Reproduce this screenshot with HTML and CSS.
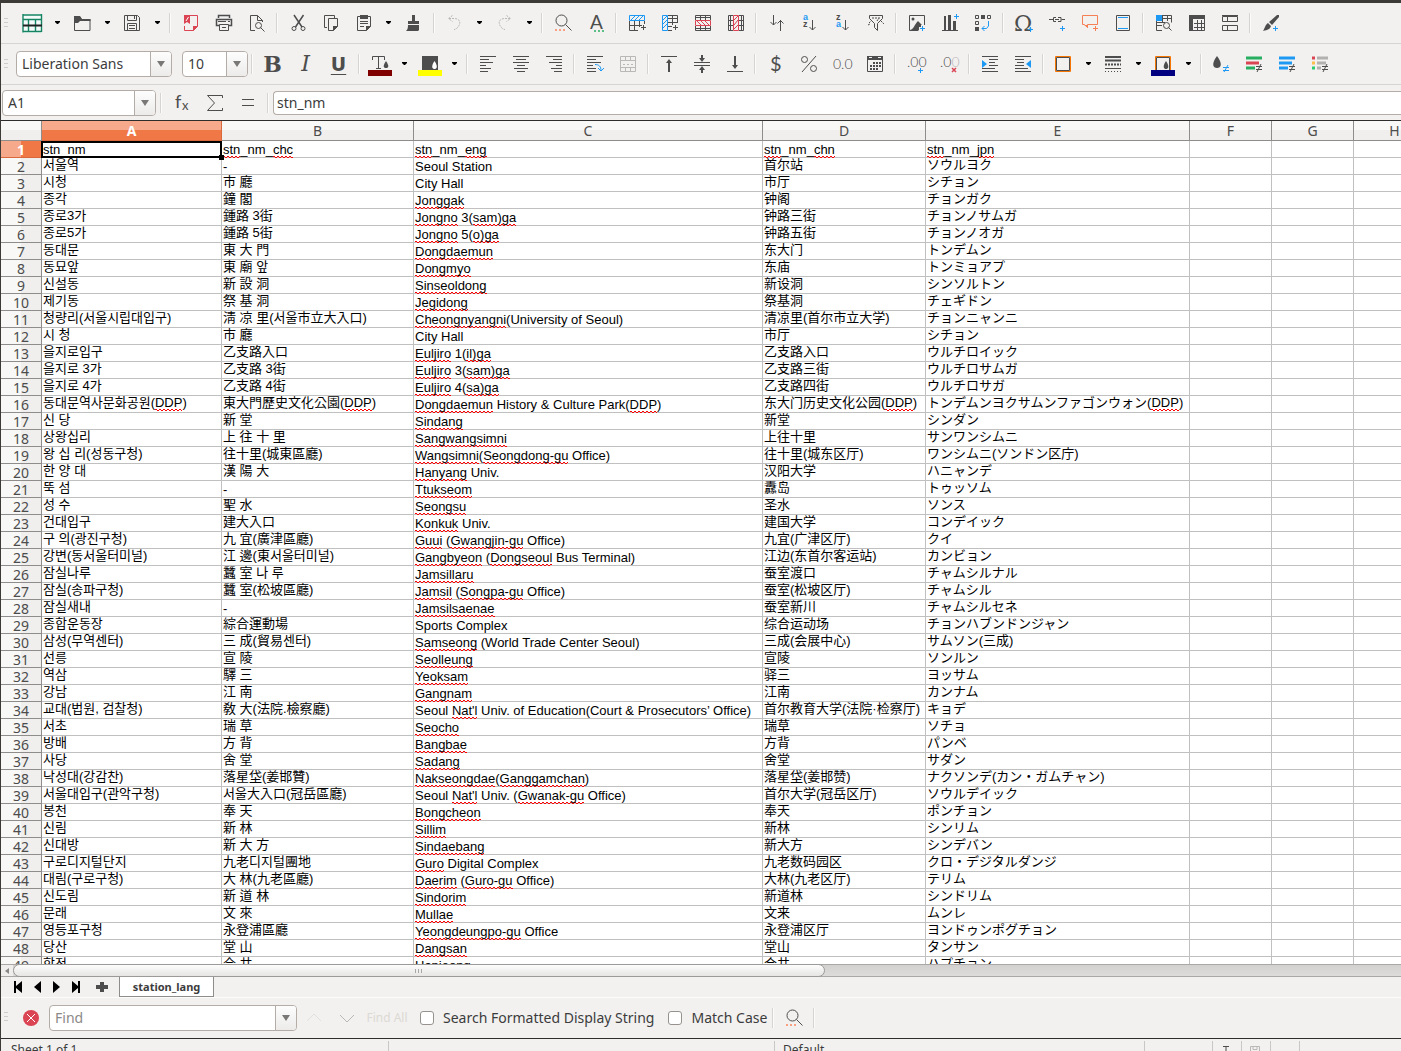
FILE: index.html
```html
<!DOCTYPE html>
<html lang="en">
<head>
<meta charset="utf-8">
<title>station_lang</title>
<link rel="stylesheet" href="styles.css">
</head>
<body>
<div class="app">
<div class="titlebar"></div>

<div class="toolbar" role="toolbar" aria-label="Standard">
<i class="grip"></i>
<button class="tool" aria-label="New"><svg viewBox="0 0 21 20"><path d="M1 1h19v19H1z" fill="#f4fbf8"/><path d="M.5 2h19M1 1v18.500M.5 6.500h19M.5 18.500h19M19.500 1v18M6.500 6.500v12M13.500 6.500v12" stroke="#168463" stroke-width="1.400"/><path d="M1 12.500h19" stroke="#222" stroke-width="2"/></svg></button>
<button class="drop" aria-label="New options"><svg viewBox="0 0 17 20"><path d="M6 8h5v1l-2 2h-1l-2-2z"/></svg></button>
<button class="tool" aria-label="Open"><svg viewBox="0 0 21 20"><path d="M2.500 17.500v-14h5l2 3h8.500v11z" class="k"/><path d="M2 3h6l2 3h8.500v2H8l-2 2H2z" class="f"/></svg></button>
<button class="drop" aria-label="Open options"><svg viewBox="0 0 17 20"><path d="M6 8h5v1l-2 2h-1l-2-2z"/></svg></button>
<button class="tool" aria-label="Save"><svg viewBox="0 0 21 20"><path d="M2.500 2.500h13l2 2v13h-15zM5.500 2.500v5h9v-5M5.500 17.500v-7h9v7M12.500 3v3M7 12.500h6M7 15.500h6" class="k"/></svg></button>
<button class="drop" aria-label="Save options"><svg viewBox="0 0 17 20"><path d="M6 8h5v1l-2 2h-1l-2-2z"/></svg></button>
<i class="sep"></i>
<button class="tool" aria-label="Export as PDF"><svg viewBox="0 0 21 20"><path d="M10 2.500h7.500v11l-4 4h-9V13" class="r"/><path d="M4 2h6v9l-3-2-3 2zM13 18v-5h5z" fill="#da4453"/><path d="M6 8l2.500-4" stroke="#fff"/></svg></button>
<button class="tool" aria-label="Print"><svg viewBox="0 0 21 20"><path d="M5.500 5V2.500h11V5M3.500 6.500h15v6h-15z" class="k" stroke-width="1.500"/><path d="M5 8.500h8M15 8.500h2" class="k"/><path d="M6.500 11.500h9v6h-9z" fill="#f2f1f0" stroke="#4d4d4d"/><path d="M9 14.500h4" class="k"/></svg></button>
<button class="tool" aria-label="Print Preview"><svg viewBox="0 0 21 20"><path d="M9 17.500H4.500v-15h7l5 5V9M11.500 2.500v5h5" class="k"/><circle cx="12.500" cy="12.500" r="3" class="k"/><path d="M14.500 14.500l4 4" class="k"/></svg></button>
<i class="sep"></i>
<button class="tool" aria-label="Cut"><svg viewBox="0 0 21 20"><path d="M7 2l8 12M16.500 2l-8 12" class="k" stroke-width="1.500"/><circle cx="7" cy="15.500" r="2" class="k"/><circle cx="16" cy="15.500" r="2" class="k"/></svg></button>
<button class="tool" aria-label="Copy"><svg viewBox="0 0 21 20"><path d="M7 14.500H4.500v-12h10V5M8.500 5.500h9v8l-4 4h-5z" class="k"/><path d="M13 18v-5h5z" class="f"/></svg></button>
<button class="tool" aria-label="Paste"><svg viewBox="0 0 21 20"><path d="M4.500 3.500h13v10l-4 4h-9zM7 8.500h8M7 10.500h8M7 13.500h4" class="k"/><path d="M7 2h8v4H7zM13 18v-5h5z" class="f"/></svg></button>
<button class="drop" aria-label="Paste options"><svg viewBox="0 0 17 20"><path d="M6 8h5v1l-2 2h-1l-2-2z"/></svg></button>
<button class="tool" aria-label="Clone Formatting"><svg viewBox="0 0 21 20"><path d="M9 2h3v6h4v3H5V8h4zM5 12h11v5l-1 1H3c1-1 2-2 2-6z" class="f"/></svg></button>
<i class="sep"></i>
<button class="tool off" aria-label="Undo" disabled><svg viewBox="0 0 21 20"><path d="M8.500 2.500l-4 3 4 3M5 5.500h5c5 0 7 3 5 7-1 2-3 4-5 4" class="o" stroke-dasharray="2 1"/></svg></button>
<button class="drop" aria-label="Undo options"><svg viewBox="0 0 17 20"><path d="M6 8h5v1l-2 2h-1l-2-2z"/></svg></button>
<button class="tool off" aria-label="Redo" disabled><svg viewBox="0 0 21 20"><path d="M12.500 2.500l4 3-4 3M16 5.500h-5c-5 0-7 3-5 7 1 2 3 4 5 4" class="o" stroke-dasharray="2 1"/></svg></button>
<button class="drop" aria-label="Redo options"><svg viewBox="0 0 17 20"><path d="M6 8h5v1l-2 2h-1l-2-2z"/></svg></button>
<i class="sep"></i>
<button class="tool" aria-label="Find and Replace"><svg viewBox="0 0 21 20"><circle cx="9.500" cy="7.500" r="5.500" class="k"/><path d="M13.500 11.500l6 6" class="k"/><path d="M3 17h10" stroke="#f7a182" stroke-width="2" stroke-dasharray="2 2"/></svg></button>
<button class="tool" aria-label="Spelling"><svg viewBox="0 0 21 20"><text x="5" y="16" class="t" font-size="19">A</text><path d="M9 18h10" stroke="#5bbf86" stroke-width="2" stroke-dasharray="2 2"/></svg></button>
<i class="sep"></i>
<button class="tool" aria-label="Insert Rows Above"><svg viewBox="0 0 21 20"><path d="M3.500 8v9.500H12M3 12.500h13M8.500 8v10M13.500 8v6M18.500 8v3M15 14.500h5M17.500 12v5" class="k"/><path d="M3.500 2.500h15v5h-15zM5 7l4-4M9 7l4-4M13 7l4-4" class="b"/></svg></button>
<button class="tool" aria-label="Insert Columns Before"><svg viewBox="0 0 21 20"><path d="M9 2.500h9.500V10M9 5.500h9M9 9.500h9M9 13.500h4M9 17.500h4M13.500 3v9M14 14.500h5M16.500 12v5" class="k"/><path d="M3.500 2.500h5v15h-5zM4 7l4-4M4 11l4-4M4 15l4-4" class="b"/></svg></button>
<button class="tool" aria-label="Delete Rows"><svg viewBox="0 0 21 20"><path d="M3.500 2.500h15v15h-15zM8.500 2v16M13.500 2v16M3 4.500h15M3 15.500h15" class="k"/><path d="M2 7h18v6H2z" fill="#f2f1f0"/><path d="M3.500 7.500h15v5h-15zM5 8l4 4M9 8l4 4M13 8l4 4" class="r"/></svg></button>
<button class="tool" aria-label="Delete Columns"><svg viewBox="0 0 21 20"><path d="M3.500 2.500h15v15h-15zM3 7.500h15M3 12.500h15M5.500 2v16M16.500 2v16" class="k"/><path d="M8 1h6v18H8z" fill="#f2f1f0"/><path d="M8.500 2.500h5v15h-5zM9 7l4-4M9 12l4-5M9 16l4-4" class="r"/></svg></button>
<i class="sep"></i>
<button class="tool" aria-label="Sort"><svg viewBox="0 0 21 20"><path d="M7.500 2v10M4.500 9l3 3 3-3M14.500 18V7M11.500 10.500l3-3 3 3" class="k"/></svg></button>
<button class="tool" aria-label="Sort Ascending"><svg viewBox="0 0 21 20"><text x="4" y="7" class="t s bl">a</text><text x="4" y="14" class="t s">z</text><path d="M13.500 7v10M10.500 14l3 3 3-3" class="k"/></svg></button>
<button class="tool" aria-label="Sort Descending"><svg viewBox="0 0 21 20"><text x="4" y="7" class="t s">z</text><text x="4" y="14" class="t s bl">a</text><path d="M13.500 7v10M10.500 14l3 3 3-3" class="k"/></svg></button>
<button class="tool" aria-label="AutoFilter"><svg viewBox="0 0 21 20"><path d="M4.500 2.500h13v3l-5 5v7l-3-3v-4l-5-5z" class="k"/><path d="M4 10l3-3M3 12l2-1M16 8l3 3M7 5h8M12 8l2-3" class="k" stroke-dasharray="2 1"/></svg></button>
<i class="sep"></i>
<button class="tool" aria-label="Insert Image"><svg viewBox="0 0 21 20"><path d="M18.500 12V2.500h-15v15H12" class="k"/><path d="M4 17c4-1 4-5 8-9l6 6h-3l-3 4H4z" class="f"/><circle cx="7" cy="6" r="1.500" class="f"/><path d="M13 15.500h7M16.500 12v7" stroke="#f2f1f0" stroke-width="3"/><path d="M14 15.500h5M16.500 13v5" class="b"/></svg></button>
<button class="tool" aria-label="Insert Chart"><svg viewBox="0 0 21 20"><path d="M3 17.500h16" class="k"/><path d="M5 3h2v14H5zM9 2h3v15H9zM14 8h3v9h-3z" class="f"/><path d="M15 3.500h5M17.500 1v5" class="b"/></svg></button>
<button class="tool" aria-label="Insert Pivot Table"><svg viewBox="0 0 21 20"><path d="M3.500 2.500h3v3h-3zM15.500 2.500h3v3h-3zM3.500 8.500h3v3h-3z" class="k"/><path d="M9 2h4v4H9zM3 14h4v4H3z" class="f"/><path d="M16.500 8v5l-2 2.500H10M12.500 13l-2.500 2.500 2.500 2.500" class="b"/></svg></button>
<i class="sep"></i>
<button class="tool" aria-label="Special Character"><svg viewBox="0 0 21 20"><text x="1" y="18" class="t om">Ω</text><path d="M15 16.500h5M17.500 14v5" class="b"/></svg></button>
<button class="tool" aria-label="Insert Hyperlink"><svg viewBox="0 0 21 20"><path d="M3 6.500h4M10 4.500H7.500v4H10M9 6.500h4M12 4.500h3v4h-3M15.500 6.500H19" class="k"/><path d="M14 15.500h5M16.500 13v5" class="b"/></svg></button>
<button class="tool" aria-label="Insert Comment"><svg viewBox="0 0 21 20"><path d="M3.500 2.500h15v9h-10v3l-3-3h-2z" class="c"/><path d="M5 12h4v3z" fill="#f67f53"/><path d="M14 15.500h5M16.500 13v5" class="c"/></svg></button>
<button class="tool" aria-label="Headers and Footers"><svg viewBox="0 0 21 20"><path d="M4.500 2.500h13v15h-13z" class="k"/><path d="M6 4.500h10M6 15.500h10" class="b"/></svg></button>
<i class="sep"></i>
<button class="tool" aria-label="Define Print Area"><svg viewBox="0 0 21 20"><path d="M3.500 8v9.500H9M4 12.500h5M9 2.500h9.500v7M9.500 2v8M14.500 3v5M4 5.500h14M4 9.500h8" class="k"/><path d="M3 2h6v6H3z" fill="#1d99f3"/><circle cx="13.500" cy="12.500" r="3" class="k"/><path d="M15.500 14.500l3 3" class="k"/></svg></button>
<button class="tool" aria-label="Freeze Rows and Columns"><svg viewBox="0 0 21 20"><path d="M3.500 2.500h15v15h-15zM11.500 7v10M15.500 7v10M8 10.500h10M8 14.500h10" class="k"/><path d="M3 2h16v4H7v12H3z" class="f"/></svg></button>
<button class="tool" aria-label="Split Window"><svg viewBox="0 0 21 20"><path d="M3.500 3.500h15v5h-15zM3.500 12.500h15v5h-15zM8.500 4v5M8.500 12v6M3 2.500h16" class="k"/></svg></button>
<i class="sep"></i>
<button class="tool" aria-label="Show Draw Functions"><svg viewBox="0 0 21 20"><path d="M19 2v2l-7 8-3-3 8-7zM8 10l3 3c-1 3-3 4-8 5 2-3 2-6 5-8z" class="f"/><path d="M13 15.500h5M15.500 13v5" class="b"/></svg></button>
</div>

<div class="toolbar" role="toolbar" aria-label="Formatting">
<i class="grip"></i>
<div class="combo font"><input value="Liberation Sans" aria-label="Font Name"><button aria-label="Choose font"><svg viewBox="0 0 8 6"><path d="M0 0h8L4 6z"/></svg></button></div>
<div class="combo size"><input value="10" aria-label="Font Size"><button aria-label="Choose size"><svg viewBox="0 0 8 6"><path d="M0 0h8L4 6z"/></svg></button></div>
<i class="sep"></i>
<button class="tool glyph bold" aria-label="Bold">B</button>
<button class="tool glyph ital" aria-label="Italic">I</button>
<button class="tool glyph undl" aria-label="Underline">U</button>
<i class="sep"></i>
<button class="tool" aria-label="Font Color"><svg viewBox="0 0 21 20"><path d="M3.500 6V2.500h12V6M9.500 2.500v12M7 14.500h5" class="k"/><path d="M17 7c4 6 2 7 0 7s-4-1 0-7z" class="f"/><path d="M-1 16h24v6H-1z" fill="#800000"/></svg></button>
<button class="drop" aria-label="Font Color options"><svg viewBox="0 0 17 20"><path d="M6 8h5v1l-2 2h-1l-2-2z"/></svg></button>
<button class="tool" aria-label="Highlighting"><svg viewBox="0 0 21 20"><path d="M3 2h16v14H3z" class="f"/><path d="M15.500 7c4 6 2 8 0 8s-4-2 0-8z" fill="#fff"/><path d="M-1 16h24v6H-1z" fill="#ff0"/></svg></button>
<button class="drop" aria-label="Highlighting options"><svg viewBox="0 0 17 20"><path d="M6 8h5v1l-2 2h-1l-2-2z"/></svg></button>
<i class="sep"></i>
<button class="tool" aria-label="Align Left"><svg viewBox="0 0 21 20"><path d="M3 2.500h16M3 5.500h9M3 8.500h13M3 11.500h6M3 14.500h11M3 17.500h8" class="k"/></svg></button>
<button class="tool" aria-label="Center"><svg viewBox="0 0 21 20"><path d="M3 2.500h16M6 5.500h10M3 8.500h16M7 11.500h8M4 14.500h14M7 17.500h8" class="k"/></svg></button>
<button class="tool" aria-label="Align Right"><svg viewBox="0 0 21 20"><path d="M3 2.500h16M10 5.500h9M6 8.500h13M13 11.500h6M8 14.500h11M11 17.500h8" class="k"/></svg></button>
<i class="sep"></i>
<button class="tool" aria-label="Wrap Text"><svg viewBox="0 0 21 20"><path d="M3 2.500h16M3 5.500h9M3 8.500h14M3 11.500h6M3 14.500h9M3 17.500h9" class="k"/><path d="M11 10.500c4 0 6 2 6 6M14 14l3 3 3-3" class="b"/></svg></button>
<button class="tool off" aria-label="Merge Cells" disabled><svg viewBox="0 0 21 20"><path d="M3.500 2.500h15v15h-15zM3 6.500h15M3 13.500h15M8.500 2v5M13.500 2v5M8.500 13v5M13.500 13v5M6 10.500h2M10 10.500h2M14 10.500h2" class="o"/></svg></button>
<i class="sep"></i>
<button class="tool" aria-label="Align Top"><svg viewBox="0 0 21 20"><path d="M3 2.500h16" class="k"/><path d="M10 18V9H8l3-4 3 4h-2v9z" class="f"/></svg></button>
<button class="tool" aria-label="Center Vertically"><svg viewBox="0 0 21 20"><path d="M3 8.500h16M3 11.500h16" class="k"/><path d="M10 1h2v3h2l-3 4-3-4h2zM10 19h2v-3h2l-3-4-3 4h2z" class="f"/></svg></button>
<button class="tool" aria-label="Align Bottom"><svg viewBox="0 0 21 20"><path d="M3 17.500h16" class="k"/><path d="M10 2v9H8l3 4 3-4h-2V2z" class="f"/></svg></button>
<i class="sep"></i>
<button class="tool" aria-label="Format as Currency"><svg viewBox="0 0 21 20"><text x="5" y="17" class="t" font-size="20">$</text></svg></button>
<button class="tool" aria-label="Format as Percent"><svg viewBox="0 0 21 20"><circle cx="6.500" cy="5.500" r="3" class="k"/><circle cx="15.500" cy="14.500" r="3" class="k"/><path d="M4 18L18 2" class="k"/></svg></button>
<button class="tool" aria-label="Format as Number"><svg viewBox="0 0 21 20"><text x="2" y="15" class="t n">0.0</text></svg></button>
<button class="tool" aria-label="Format as Date"><svg viewBox="0 0 21 20"><path d="M3.500 2.500h15v15h-15z" class="k"/><path d="M3 2h2v2h3V2h6v2h3V2h2v4H3z" class="f"/><path d="M9 9h8M6 12h11M6 15h8" class="k" stroke-width="2" stroke-dasharray="2 1"/></svg></button>
<i class="sep"></i>
<button class="tool" aria-label="Add Decimal Place"><svg viewBox="0 0 21 20"><text x="2" y="13" class="t n">.00</text><path d="M13 16.500h5M15.500 14v5" class="b"/></svg></button>
<button class="tool" aria-label="Delete Decimal Place"><svg viewBox="0 0 21 20"><text x="2" y="13" class="t n">.0<tspan fill="#b8b6b4">0</tspan></text><path d="M14 14l4 4M18 14l-4 4" class="r" stroke-width="1.500"/></svg></button>
<i class="sep"></i>
<button class="tool" aria-label="Increase Indent"><svg viewBox="0 0 21 20"><path d="M3 2.500h16M10 5.500h9M10 8.500h6M10 11.500h9M3 14.500h13M3 17.500h16" class="k"/><path d="M3 6l5 4-5 4z" fill="#1d99f3"/></svg></button>
<button class="tool" aria-label="Decrease Indent"><svg viewBox="0 0 21 20"><path d="M3 2.500h16M3 5.500h9M5 8.500h7M3 11.500h9M3 14.500h13M3 17.500h16" class="k"/><path d="M19 6l-5 4 5 4z" fill="#1d99f3"/></svg></button>
<i class="sep"></i>
<button class="tool" aria-label="Borders"><svg viewBox="0 0 21 20"><path d="M2.500 2.500h15v15h-15z" fill="none" stroke="#f67400"/><path d="M3.500 3.500h13v13h-13z" class="k"/></svg></button>
<button class="drop" aria-label="Borders options"><svg viewBox="0 0 17 20"><path d="M6 8h5v1l-2 2h-1l-2-2z"/></svg></button>
<button class="tool" aria-label="Border Style"><svg viewBox="0 0 21 20"><path d="M2 3h16M2 6.500h16" class="k" stroke-width="2"/><path d="M2 10.500h16" class="k" stroke-width="2" stroke-dasharray="2 1"/><path d="M2 14.500h16" class="k"/><path d="M2 17.500h16" class="k" stroke-dasharray="1 2"/></svg></button>
<button class="drop" aria-label="Border Style options"><svg viewBox="0 0 17 20"><path d="M6 8h5v1l-2 2h-1l-2-2z"/></svg></button>
<button class="tool" aria-label="Border Color"><svg viewBox="0 0 21 20"><path d="M2.500 17V2.500h15V17" fill="none" stroke="#f67400"/><path d="M3.500 16V3.500h13v13" class="k"/><path d="M13 7c4 6 2 8 0 8s-4-2 0-8z" class="f"/><path d="M-2 16h24v6H-2z" fill="#000080"/></svg></button>
<button class="drop" aria-label="Border Color options"><svg viewBox="0 0 17 20"><path d="M6 8h5v1l-2 2h-1l-2-2z"/></svg></button>
<i class="sep"></i>
<button class="tool" aria-label="Conditional Condition"><svg viewBox="0 0 21 20"><path d="M6 2c6 8 4 12 0 12S0 10 6 2z" class="f"/><path d="M12 13.500h6M12 16.500h6M17 11l-4 7" class="b"/></svg></button>
<button class="tool" aria-label="Color Scale"><svg viewBox="0 0 21 20"><path d="M2 4h16" stroke="#27ae60" stroke-width="3"/><path d="M2 9h13" stroke="#da4453" stroke-width="3"/><path d="M2 14h9" stroke="#27ae60" stroke-width="3"/><path d="M12 12.500h6M12 15.500h6M17 10l-4 8" class="k"/></svg></button>
<button class="tool" aria-label="Data Bar"><svg viewBox="0 0 21 20"><path d="M2 4h16M2 9h13M2 14h9" stroke="#1d99f3" stroke-width="3"/><path d="M12 12.500h6M12 15.500h6M17 10l-4 8" class="k"/></svg></button>
<button class="tool" aria-label="Icon Set"><svg viewBox="0 0 21 20"><path d="M7 4h11M7 9h9M7 14h4" stroke="#b3b1af" stroke-width="3"/><path d="M2 4h3" stroke="#da4453" stroke-width="3"/><path d="M2 9h3" stroke="#fdbc4b" stroke-width="3"/><path d="M2 14h3" stroke="#2ecc71" stroke-width="3"/><path d="M12 12.500h6M12 15.500h6M17 10l-4 8" class="k"/></svg></button>
</div>

<div class="formula">
<div class="combo name"><input value="A1" aria-label="Name Box"><button aria-label="Choose range"><svg viewBox="0 0 8 6"><path d="M0 0h8L4 6z"/></svg></button></div>
<i class="sep"></i>
<button class="tool" aria-label="Function Wizard"><svg viewBox="0 0 21 20"><text x="4" y="15" class="t" font-size="18">f</text><text x="11" y="17" class="t" font-size="13">x</text></svg></button>
<button class="tool" aria-label="Sum"><svg viewBox="0 0 21 20"><path d="M18.500 5V2.500h-15l7 7.500-7 7.500h15V15" class="k"/></svg></button>
<button class="tool" aria-label="Formula"><svg viewBox="0 0 21 20"><path d="M5 6.500h12M5 12.500h12" class="k"/></svg></button>
<i class="sep"></i>
<input class="line" value="stn_nm" aria-label="Input line">
</div>

<div class="sheet">
<table class="grid">
<colgroup><col class="c0"><col class="ca"><col class="cb"><col class="cc"><col class="cd"><col class="ce"><col class="cf"><col class="cf"><col class="cf"></colgroup>
<thead><tr><td class="corner"></td><th class="on">A</th><th>B</th><th>C</th><th>D</th><th>E</th><th>F</th><th>G</th><th>H</th></tr></thead>
<tbody>
<tr class="lat"><th class="on">1<td class="active"><u>stn</u>_nm<td><u>stn</u>_nm_<u>chc</u><td><u>stn</u>_nm_<u>eng</u><td><u>stn</u>_nm_<u>chn</u><td><u>stn</u>_nm_<u>jpn</u><td><td><td>
<tr><th>2<td>서울역<td class="lat">-<td>Seoul Station<td>首尔站<td>ソウルヨク<td><td><td>
<tr><th>3<td>시청<td>市 廳<td>City Hall<td>市厅<td>シチョン<td><td><td>
<tr><th>4<td>종각<td>鐘 閣<td><u>Jonggak</u><td>钟阁<td>チョンガク<td><td><td>
<tr><th>5<td>종로3가<td>鍾路 3街<td><u>Jongno</u> 3(<u>sam)ga</u><td>钟路三街<td>チョンノサムガ<td><td><td>
<tr><th>6<td>종로5가<td>鍾路 5街<td><u>Jongno</u> 5(<u>o)ga</u><td>钟路五街<td>チョンノオガ<td><td><td>
<tr><th>7<td>동대문<td>東 大 門<td><u>Dongdaemun</u><td>东大门<td>トンデムン<td><td><td>
<tr><th>8<td>동묘앞<td>東 廟 앞<td><u>Dongmyo</u><td>东庙<td>トンミョアプ<td><td><td>
<tr><th>9<td>신설동<td>新 設 洞<td><u>Sinseoldong</u><td>新设洞<td>シンソルトン<td><td><td>
<tr><th>10<td>제기동<td>祭 基 洞<td><u>Jegidong</u><td>祭基洞<td>チェギドン<td><td><td>
<tr><th>11<td>청량리(서울시립대입구)<td>淸 凉 里(서울市立大入口)<td><u>Cheongnyangni</u>(University of Seoul)<td>清凉里(首尔市立大学)<td>チョンニャンニ<td><td><td>
<tr><th>12<td>시 청<td>市 廳<td>City Hall<td>市厅<td>シチョン<td><td><td>
<tr><th>13<td>을지로입구<td>乙支路入口<td><u>Euljiro</u> 1(<u>il)ga</u><td>乙支路入口<td>ウルチロイック<td><td><td>
<tr><th>14<td>을지로 3가<td>乙支路 3街<td><u>Euljiro</u> 3(<u>sam)ga</u><td>乙支路三街<td>ウルチロサムガ<td><td><td>
<tr><th>15<td>을지로 4가<td>乙支路 4街<td><u>Euljiro</u> 4(<u>sa)ga</u><td>乙支路四街<td>ウルチロサガ<td><td><td>
<tr><th>16<td>동대문역사문화공원(<u>DDP</u>)<td>東大門歷史文化公園(<u>DDP</u>)<td><u>Dongdaemun</u> History &amp; Culture Park(<u>DDP</u>)<td>东大门历史文化公园(<u>DDP</u>)<td>トンデムンヨクサムンファゴンウォン(<u>DDP</u>)<td><td><td>
<tr><th>17<td>신 당<td>新 堂<td><u>Sindang</u><td>新堂<td>シンダン<td><td><td>
<tr><th>18<td>상왕십리<td>上 往 十 里<td><u>Sangwangsimni</u><td>上往十里<td>サンワンシムニ<td><td><td>
<tr><th>19<td>왕 십 리(성동구청)<td>往十里(城東區廳)<td><u>Wangsimni</u>(<u>Seongdong-gu</u> Office)<td>往十里(城东区厅)<td>ワンシムニ(ソンドン区庁)<td><td><td>
<tr><th>20<td>한 양 대<td>漢 陽 大<td><u>Hanyang</u> Univ.<td>汉阳大学<td>ハニャンデ<td><td><td>
<tr><th>21<td>뚝 섬<td class="lat">-<td><u>Ttukseom</u><td>纛岛<td>トゥッソム<td><td><td>
<tr><th>22<td>성 수<td>聖 水<td><u>Seongsu</u><td>圣水<td>ソンス<td><td><td>
<tr><th>23<td>건대입구<td>建大入口<td><u>Konkuk</u> Univ.<td>建国大学<td>コンデイック<td><td><td>
<tr><th>24<td>구 의(광진구청)<td>九 宜(廣津區廳)<td><u>Guui</u> (<u>Gwangjin-gu</u> Office)<td>九宜(广津区厅)<td>クイ<td><td><td>
<tr><th>25<td>강변(동서울터미널)<td>江 邊(東서울터미널)<td><u>Gangbyeon</u> (<u>Dongseoul</u> Bus Terminal)<td>江边(东首尔客运站)<td>カンビョン<td><td><td>
<tr><th>26<td>잠실나루<td>蠶 室 나 루<td><u>Jamsillaru</u><td>蚕室渡口<td>チャムシルナル<td><td><td>
<tr><th>27<td>잠실(송파구청)<td>蠶 室(松坡區廳)<td><u>Jamsil</u> (<u>Songpa-gu</u> Office)<td>蚕室(松坡区厅)<td>チャムシル<td><td><td>
<tr><th>28<td>잠실새내<td class="lat">-<td><u>Jamsilsaenae</u><td>蚕室新川<td>チャムシルセネ<td><td><td>
<tr><th>29<td>종합운동장<td>綜合運動場<td>Sports Complex<td>综合运动场<td>チョンハブンドンジャン<td><td><td>
<tr><th>30<td>삼성(무역센터)<td>三 成(貿易센터)<td><u>Samseong</u> (World Trade Center Seoul)<td>三成(会展中心)<td>サムソン(三成)<td><td><td>
<tr><th>31<td>선릉<td>宣 陵<td><u>Seolleung</u><td>宣陵<td>ソンルン<td><td><td>
<tr><th>32<td>역삼<td>驛 三<td><u>Yeoksam</u><td>驿三<td>ヨッサム<td><td><td>
<tr><th>33<td>강남<td>江 南<td><u>Gangnam</u><td>江南<td>カンナム<td><td><td>
<tr><th>34<td>교대(법원, 검찰청)<td>敎 大(法院.檢察廳)<td>Seoul <u>Nat'l</u> Univ. of Education(Court &amp; Prosecutors’ Office)<td>首尔教育大学(法院·检察厅)<td>キョデ<td><td><td>
<tr><th>35<td>서초<td>瑞 草<td><u>Seocho</u><td>瑞草<td>ソチョ<td><td><td>
<tr><th>36<td>방배<td>方 背<td><u>Bangbae</u><td>方背<td>パンベ<td><td><td>
<tr><th>37<td>사당<td>舍 堂<td><u>Sadang</u><td>舍堂<td>サダン<td><td><td>
<tr><th>38<td>낙성대(강감찬)<td>落星垈(姜邯贊)<td><u>Nakseongdae</u>(<u>Ganggamchan</u>)<td>落星垈(姜邯赞)<td>ナクソンデ(カン・ガムチャン)<td><td><td>
<tr><th>39<td>서울대입구(관악구청)<td>서울大入口(冠岳區廳)<td>Seoul <u>Nat'l</u> Univ. (<u>Gwanak-gu</u> Office)<td>首尔大学(冠岳区厅)<td>ソウルデイック<td><td><td>
<tr><th>40<td>봉천<td>奉 天<td><u>Bongcheon</u><td>奉天<td>ポンチョン<td><td><td>
<tr><th>41<td>신림<td>新 林<td><u>Sillim</u><td>新林<td>シンリム<td><td><td>
<tr><th>42<td>신대방<td>新 大 方<td><u>Sindaebang</u><td>新大方<td>シンデバン<td><td><td>
<tr><th>43<td>구로디지털단지<td>九老디지털團地<td><u>Guro</u> Digital Complex<td>九老数码园区<td>クロ・デジタルダンジ<td><td><td>
<tr><th>44<td>대림(구로구청)<td>大 林(九老區廳)<td><u>Daerim</u> (<u>Guro-gu</u> Office)<td>大林(九老区厅)<td>テリム<td><td><td>
<tr><th>45<td>신도림<td>新 道 林<td><u>Sindorim</u><td>新道林<td>シンドリム<td><td><td>
<tr><th>46<td>문래<td>文 來<td><u>Mullae</u><td>文来<td>ムンレ<td><td><td>
<tr><th>47<td>영등포구청<td>永登浦區廳<td><u>Yeongdeungpo-gu</u> Office<td>永登浦区厅<td>ヨンドゥンポグチョン<td><td><td>
<tr><th>48<td>당산<td>堂 山<td><u>Dangsan</u><td>堂山<td>タンサン<td><td><td>
<tr><th>49<td>합정<td>合 井<td><u>Hapjeong</u><td>合井<td>ハプチョン<td><td><td>
</tbody>
</table>
</div>

<div class="scroll"><button aria-label="Scroll left"><svg viewBox="0 0 4 6"><path d="M4 0v6L0 3z" fill="#8a8886"/></svg></button><div class="thumb"><svg viewBox="0 0 8 4"><path d="M.5 0v4M3.500 0v4M6.500 0v4" stroke="#a9a7a5"/></svg></div></div>

<div class="tabs">
<button aria-label="First sheet"><svg viewBox="0 0 10 12"><path d="M0 0h2v5l6-5v12L2 7v5H0z"/></svg></button>
<button aria-label="Previous sheet"><svg viewBox="0 0 10 12"><path d="M8 0v12L1 6z"/></svg></button>
<button aria-label="Next sheet"><svg viewBox="0 0 10 12"><path d="M1 0v12l7-6z"/></svg></button>
<button aria-label="Last sheet"><svg viewBox="0 0 10 12"><path d="M9 0H7v5L1 0v12l6-5v5h2z"/></svg></button>
<button class="add" aria-label="Add sheet"><svg viewBox="0 0 12 12"><path d="M4 1h4v3h4v4H8v3H4V8H0V4h4z" fill="#4d4d4d"/></svg></button>
<button class="tab">station_lang</button>
</div>

<div class="find">
<i class="grip"></i>
<button class="close" aria-label="Close Find Bar"><svg viewBox="0 0 16 16"><circle cx="8" cy="8" r="8" fill="#da4453"/><path d="M4 4l8 8M12 4l-8 8" stroke="#fff"/></svg></button>
<div class="combo search"><input placeholder="Find" aria-label="Find"><button aria-label="Search history"><svg viewBox="0 0 8 6"><path d="M0 0h8L4 6z"/></svg></button></div>
<button class="tool" aria-label="Find Previous"><svg viewBox="0 0 21 20"><path d="M4 13l7-7 7 7" fill="none" stroke="#e2dfdc"/></svg></button>
<button class="tool" aria-label="Find Next"><svg viewBox="0 0 21 20"><path d="M4 7l7 7 7-7" class="o"/></svg></button>
<button class="all" disabled>Find All</button>
<label><input type="checkbox">Search Formatted Display String</label>
<label><input type="checkbox">Match Case</label>
<i class="sep"></i>
<button class="tool" aria-label="Find and Replace"><svg viewBox="0 0 21 20"><circle cx="9.500" cy="7.500" r="5.500" class="k"/><path d="M13.500 11.500l6 6" class="k"/><path d="M3 17h10" stroke="#f7a182" stroke-width="2" stroke-dasharray="2 2"/></svg></button>
<i class="sep"></i>
</div>

<div class="status">
<span>Sheet 1 of 1</span><span></span><span>Default</span><span></span><span><svg viewBox="0 0 10 12"><path d="M2 1.500h6M5 1.500v10" class="k"/></svg></span><span><svg viewBox="0 0 10 12"><path d="M.5 1.500h9v9h-9zM3 1.500v3h4v-3M3 10V7h4v3" class="o"/></svg></span><span></span><span></span>
</div>
</div>
</body>
</html>
```
FILE: styles.css
```css
* { box-sizing: border-box; }

body {
  margin: 0;
  overflow: hidden;
  background: #f2f1f0;
  color: #3c3c3c;
  font: 14px/18px "Noto Sans", "Open Sans", sans-serif;
}

button, input { font: inherit; color: inherit; }
button { margin: 0; padding: 0; border: 0; background: none; }
svg { display: block; overflow: visible; }

/* The status bar hangs over the lower edge of the window. */
.app {
  display: flex;
  flex-direction: column;
  height: calc(100vh + 10px);
  border-left: 1px solid #3c3b37;
}
.app > * { flex: none; }
.titlebar { height: 3px; background: #3c3b37; }

/* Toolbars */
.toolbar {
  display: flex;
  align-items: center;
  height: 41px;
  border-bottom: 1px solid #d6d4d2;
}
.toolbar .grip { margin-right: 8px; }
.grip {
  width: 4px;
  height: 11px;
  margin-left: 3px;
  background: repeating-linear-gradient(#cfcdcb 0 1px, transparent 1px 4px);
}
.sep {
  width: 2px;
  height: 20px;
  margin: 0 3px;
  background: linear-gradient(90deg, #d6d4d2 50%, #fbfbfa 50%);
}
.tool { width: 33px; height: 30px; flex: none; }
.tool svg { width: 21px; height: 20px; margin: 0 6px; }
.drop { width: 17px; height: 30px; flex: none; }
.drop svg { width: 17px; height: 20px; }

.k { fill: none; stroke: #4d4d4d; }
.f { fill: #4d4d4d; }
.b { fill: none; stroke: #1d99f3; }
.r { fill: none; stroke: #da4453; }
.c { fill: none; stroke: #f67f53; }
.o { fill: none; stroke: #bab8b6; }
.t { fill: #4d4d4d; font-family: Lato, "Open Sans", sans-serif; }
.n { font-size: 14px; font-weight: 300; }
.s { font: bold 9px "Liberation Sans", sans-serif; }
.bl { fill: #1d99f3; }
.om { font: 22px "DejaVu Serif", serif; }

.glyph { color: #4d4d4d; line-height: 30px; }
.bold { font: bold 22px/30px "DejaVu Serif", serif; }
.ital { font: italic 22px/30px "DejaVu Serif", serif; }
.undl { font: bold 19px/30px "DejaVu Sans", sans-serif; text-decoration: underline 1px; text-underline-offset: 3px; }

.combo {
  display: flex;
  height: 26px;
  border: 1px solid #b4aca6;
  border-radius: 4px;
  background: #fff;
  overflow: hidden;
}
.combo input {
  flex: 1;
  min-width: 0;
  padding: 0 5px;
  border: 0;
  outline: 0;
  background: none;
}
.combo button {
  display: flex;
  align-items: center;
  justify-content: center;
  width: 21px;
  border-left: 1px solid #b4aca6;
  background: linear-gradient(#fdfdfd, #ecebea);
}
.combo button svg { width: 8px; height: 6px; fill: #7a7876; }
.font { width: 156px; }
.size { width: 66px; margin-left: 10px; }
.name { width: 154px; margin-right: 1px; }

.formula {
  display: flex;
  align-items: center;
  height: 36px;
  padding-left: 1px;
  border-bottom: 1px solid #2d2d2d;
}
.line {
  flex: 1;
  min-width: 0;
  height: 24px;
  margin-left: 1px;
  padding: 0 3px;
  border: 1px solid #b4aca6;
  border-right: 0;
  border-radius: 4px 0 0 4px;
  outline: 0;
  background: #fff;
}

/* Cells */
.app > .sheet { flex: 1; min-height: 0; overflow: hidden; background: #fff; }
.grid {
  width: 1435px;
  table-layout: fixed;
  border-collapse: separate;
  border-spacing: 0;
}
.c0 { width: 41px; }
.ca { width: 180px; }
.cb { width: 192px; }
.cc { width: 349px; }
.cd { width: 163px; }
.ce { width: 264px; }
.cf { width: 82px; }

.grid th {
  padding: 0;
  border: solid #8f8d8b;
  border-width: 0 1px 1px 0;
  font-weight: normal;
  color: #4c4c4c;
}
.grid thead th, .corner {
  height: 20px;
  background: linear-gradient(#f8f8f7 50%, #f0efee 50%);
  line-height: 19px;
}
.grid tbody th {
  height: 17px;
  padding-top: 1px;
  background: linear-gradient(90deg, #f8f8f7 50%, #f0efee 50%);
  line-height: 15px;
}
.grid th.on { color: #fff; font-weight: bold; border-color: #d9693c; }
.grid thead th.on { background: linear-gradient(#f7a98b 50%, #f07746 50%); }
.grid tbody th.on { background: linear-gradient(90deg, #f7a98b 50%, #f07746 50%); }

.grid td {
  padding: 1px 0 0 1px;
  border: solid #c0c0c0;
  border-width: 0 1px 1px 0;
  color: #000;
  font: 13px/15px "Liberation Sans", "Noto Sans CJK KR", sans-serif;
  vertical-align: top;
  white-space: nowrap;
}
.grid .corner { border-color: #8f8d8b; }
.grid td:nth-child(2), .grid td:nth-child(3) { line-height: 12px; }
.grid td:nth-child(5) { font-family: "Liberation Sans", "Noto Sans CJK SC", sans-serif; line-height: 12px; }
.grid td:nth-child(6) { font-family: "Liberation Sans", "Noto Sans CJK JP", sans-serif; line-height: 12px; }
.grid tr.lat td:nth-child(n), .grid td.lat:nth-child(n) { line-height: 15px; }

/* Spelling marks */
.grid u {
  padding-bottom: 1px;
  text-decoration: none;
  background:
    linear-gradient(90deg, #f00 50%, transparent 50%) 0 calc(100% - 1px) / 4px 1px repeat-x,
    linear-gradient(90deg, transparent 50%, #f00 50%) 0 100% / 4px 1px repeat-x;
}

.active { position: relative; }
.active::before {
  content: "";
  position: absolute;
  inset: 0 -1px -1px -1px;
  border: 2px solid #000;
}
.active::after {
  content: "";
  position: absolute;
  right: -3px;
  bottom: -3px;
  width: 5px;
  height: 5px;
  background: #000;
}

/* Horizontal scroll bar */
.scroll {
  display: flex;
  height: 13px;
  border: solid #aaa8a6;
  border-width: 1px 0;
  background: linear-gradient(#d3d1cf, #dedcda);
}
.scroll button { display: flex; align-items: center; justify-content: center; width: 12px; background: #efeeed; }
.scroll button svg { width: 4px; height: 6px; }
.thumb {
  display: flex;
  align-items: center;
  justify-content: center;
  width: 58%;
  margin: -1px 0;
  border: 1px solid #9c9a98;
  border-radius: 7px;
  background: linear-gradient(#fdfdfd, #e6e5e4);
}
.thumb svg { width: 8px; height: 4px; }

/* Sheet tabs */
.tabs {
  display: flex;
  align-items: center;
  height: 20px;
  padding-left: 8px;
}
.tabs button { width: 19px; }
.tabs svg { width: 10px; height: 12px; margin: 0 auto; }
.tabs .add { width: 34px; }
.tabs .add svg { width: 12px; }
.tabs .tab {
  align-self: stretch;
  width: 95px;
  border: 1px solid #8f8d8b;
  border-top: 0;
  background: #fff;
  font-size: 11px;
  font-weight: bold;
}

/* Find bar */
.find {
  display: flex;
  align-items: center;
  height: 41px;
  padding-bottom: 1px;
  border-top: 1px solid #fcfcfb;
}
.close { width: 16px; height: 16px; margin: 0 10px 0 15px; }
.search { width: 248px; }
.search input::placeholder { color: #8b8987; opacity: 1; }
.all { width: 42px; margin: 0 12px 0 3px; font-size: 12px; color: #dcd9d3; white-space: nowrap; }
.find label { display: flex; align-items: center; gap: 9px; margin-right: 14px; white-space: nowrap; }
.find label + .sep { margin-left: -9px; }
.find label input {
  appearance: none;
  width: 14px;
  height: 14px;
  margin: 0;
  border: 1px solid #96928e;
  border-radius: 3px;
  background: #fff;
}

/* Status bar */
.status {
  display: grid;
  grid-template-columns: 388px 386px minmax(0, 370px) 68px 29px 29px 29px 1fr;
  height: 23px;
  padding-top: 2px;
  border-top: 1px solid #2d2d2d;
  font-size: 12px;
}
.status span { padding-left: 8px; border-right: 1px solid #c9c7c5; }
.status span:first-child { padding-left: 10px; }
.status span:last-child { border: 0; }
.status svg { width: 10px; height: 12px; margin-top: 4px; }
```
